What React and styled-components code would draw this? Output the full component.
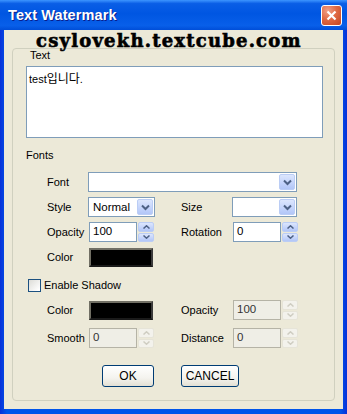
import React from "react";
import styled, { createGlobalStyle } from "styled-components";

const GlobalStyle = createGlobalStyle`
  html, body {
    margin: 0;
    padding: 0;
    background: #ffffff;
  }
  * {
    box-sizing: border-box;
  }
`;

const Window = styled.div`
  position: relative;
  width: 347px;
  height: 414px;
  display: flex;
  flex-direction: column;
  background: linear-gradient(90deg, #0831d9 0%, #0055ea 2%, #0055ea 98%, #0831d9 100%);
  font-family: "Liberation Sans", Tahoma, sans-serif;
  font-size: 11px;
  color: #000;
  overflow: hidden;
`;

const TitleBar = styled.div`
  height: 30px;
  flex: none;
  display: flex;
  align-items: center;
  justify-content: space-between;
  padding: 0 5px 0 8px;
  background: linear-gradient(
    180deg,
    #3d95ff 0%,
    #0a5ee6 12%,
    #0056e2 45%,
    #085fe9 85%,
    #004ed8 100%
  );
`;

const Title = styled.span`
  color: #ffffff;
  font-weight: bold;
  font-size: 14.5px;
  letter-spacing: 0.1px;
  text-shadow: 1px 1px 0 #0a1e8c;
`;

const CloseButton = styled.div`
  width: 21px;
  height: 21px;
  border: 1px solid #ffffff;
  border-radius: 3px;
  display: flex;
  align-items: center;
  justify-content: center;
  background: radial-gradient(circle at 30% 25%, #f0a088 0%, #e06a44 45%, #c24420 100%);
`;

const Body = styled.div`
  flex: 1;
  margin: 0 4px 5px 4px;
  background: #ece9d8;
  padding: 18px 8px 8px 8px;
  display: flex;
`;

const Group = styled.div`
  flex: 1;
  border: 1px solid #d0d0bf;
  border-radius: 4px;
  padding: 0 11px 13px 13px;
  display: flex;
  flex-direction: column;
`;

const Caption = styled.div`
  line-height: 13px;
  margin-left: ${(p) => p.$indent || 0}px;
  margin-top: ${(p) => p.$top || 0}px;
`;

const TextBox = styled.div`
  margin-top: 4px;
  height: 72px;
  background: #ffffff;
  border: 1px solid #7f9db9;
  padding: 4px 2px;
  font-size: 11px;
  line-height: 14px;
`;

const Hangul = styled.span`
  font-family: "Noto Sans CJK KR", sans-serif;
  font-size: 12px;
`;

const FieldGrid = styled.div`
  margin: ${(p) => p.$top}px 0 0 21px;
  display: grid;
  grid-template-columns: 41px 67px 26px 51px 65px;
  grid-auto-rows: 20px;
  row-gap: ${(p) => p.$gap}px;
  align-items: center;
`;

const Label = styled.span`
  white-space: nowrap;
  grid-column: ${(p) => p.$col};
`;

const Combo = styled.div`
  grid-column: ${(p) => p.$col};
  height: 20px;
  display: flex;
  align-items: stretch;
  justify-content: space-between;
  background: #ffffff;
  border: 1px solid #7f9db9;
  padding: 1px;
`;

const ComboText = styled.span`
  padding-left: 3px;
  line-height: 16px;
  font-size: 11.5px;
`;

const DropButton = styled.div`
  width: 16px;
  border-radius: 2px;
  border: 1px solid #bbcdf5;
  background: linear-gradient(180deg, #dce6fd 0%, #c3d3fb 60%, #b2c6f7 100%);
  display: flex;
  align-items: center;
  justify-content: center;
`;

const Spin = styled.div`
  grid-column: ${(p) => p.$col};
  margin-left: 1px;
  width: 65px;
  height: 20px;
  display: flex;
  gap: 1px;
`;

const Edit = styled.div`
  flex: 1;
  border: 1px solid ${(p) => (p.$disabled ? "#b5b3a6" : "#7f9db9")};
  background: ${(p) => (p.$disabled ? "#efeee6" : "#ffffff")};
  color: ${(p) => (p.$disabled ? "#333" : "#000")};
  padding-left: 3px;
  line-height: 17px;
  font-size: 11.5px;
`;

const SpinButtons = styled.div`
  width: 16px;
  display: flex;
  flex-direction: column;
  gap: 1px;
`;

const SpinHalf = styled.div`
  flex: 1;
  border-radius: 2px;
  border: 1px solid ${(p) => (p.$disabled ? "#e6e4d8" : "#bbcdf5")};
  background: ${(p) =>
    p.$disabled
      ? "#f3f2ec"
      : "linear-gradient(180deg, #dce6fd 0%, #c3d3fb 60%, #b2c6f7 100%)"};
  display: flex;
  align-items: center;
  justify-content: center;
`;

const Swatch = styled.div`
  grid-column: 2;
  margin-left: 1px;
  width: 64px;
  height: 19px;
  background: #000000;
  border: 2px solid;
  border-color: #716f64 #3a3a3a #1a1a1a #716f64;
`;

const CheckRow = styled.label`
  margin: 11px 0 0 2px;
  height: 14px;
  display: flex;
  align-items: center;
  gap: 3px;
`;

const CheckBox = styled.span`
  width: 13px;
  height: 13px;
  border: 1px solid #1c5180;
  background: linear-gradient(135deg, #dcdcd7 0%, #ffffff 90%);
`;

const ButtonRow = styled.div`
  margin: 17px 0 0 76px;
  display: flex;
  gap: 27px;
`;

const Button = styled.div`
  width: ${(p) => p.$w}px;
  height: 22px;
  border: 1px solid #003c74;
  border-radius: 3px;
  background: linear-gradient(180deg, #ffffff 0%, #f4f3ee 60%, #e3e0d4 100%);
  display: flex;
  align-items: center;
  justify-content: center;
  font-size: 12px;
`;

const Watermark = styled.div`
  position: absolute;
  left: 36px;
  top: 30px;
  font-family: "DejaVu Serif", "Liberation Serif", serif;
  font-weight: 900;
  font-size: 18px;
  letter-spacing: 1.2px;
  color: #000000;
  -webkit-text-stroke: 0.6px #000000;
  pointer-events: none;
`;

const Chevron = ({ color = "#4d6185" }) => (
  <svg width="9" height="7" viewBox="0 0 9 7">
    <polyline points="1,1.5 4.5,5 8,1.5" fill="none" stroke={color} strokeWidth="2" />
  </svg>
);

const Arrow = ({ up, color }) => (
  <svg width="7" height="4" viewBox="0 0 7 4">
    <polyline
      points={up ? "0.5,3.5 3.5,0.8 6.5,3.5" : "0.5,0.5 3.5,3.2 6.5,0.5"}
      fill="none"
      stroke={color}
      strokeWidth="1.5"
    />
  </svg>
);

const SpinBox = ({ col, value, disabled }) => {
  const arrow = disabled ? "#cfcdc2" : "#4d6185";
  return (
    <Spin $col={col}>
      <Edit $disabled={disabled}>{value}</Edit>
      <SpinButtons>
        <SpinHalf $disabled={disabled}>
          <Arrow up color={arrow} />
        </SpinHalf>
        <SpinHalf $disabled={disabled}>
          <Arrow color={arrow} />
        </SpinHalf>
      </SpinButtons>
    </Spin>
  );
};

const ComboBox = ({ col, value }) => (
  <Combo $col={col}>
    <ComboText>{value}</ComboText>
    <DropButton>
      <Chevron />
    </DropButton>
  </Combo>
);

export default function App() {
  return (
    <>
      <GlobalStyle />
      <Window>
        <TitleBar>
          <Title>Text Watermark</Title>
          <CloseButton>
            <svg width="11" height="11" viewBox="0 0 11 11">
              <path d="M1.5 1.5 L9.5 9.5 M9.5 1.5 L1.5 9.5" stroke="#fff" strokeWidth="2.2" />
            </svg>
          </CloseButton>
        </TitleBar>
        <Body>
          <Group>
            <Caption $indent={4}>Text</Caption>
            <TextBox>
              test<Hangul>입니다</Hangul>.
            </TextBox>
            <Caption $top={11}>Fonts</Caption>
            <FieldGrid $top={10} $gap={5}>
              <Label $col={1}>Font</Label>
              <ComboBox col="2 / 6" value="" />
              <Label $col={1}>Style</Label>
              <ComboBox col={2} value="Normal" />
              <Label $col={4}>Size</Label>
              <ComboBox col={5} value="" />
              <Label $col={1}>Opacity</Label>
              <SpinBox col={2} value="100" />
              <Label $col={4}>Rotation</Label>
              <SpinBox col={5} value="0" />
              <Label $col={1}>Color</Label>
              <Swatch />
            </FieldGrid>
            <CheckRow>
              <CheckBox />
              Enable Shadow
            </CheckRow>
            <FieldGrid $top={8} $gap={8}>
              <Label $col={1}>Color</Label>
              <Swatch />
              <Label $col={4}>Opacity</Label>
              <SpinBox col={5} value="100" disabled />
              <Label $col={1}>Smooth</Label>
              <SpinBox col={2} value="0" disabled />
              <Label $col={4}>Distance</Label>
              <SpinBox col={5} value="0" disabled />
            </FieldGrid>
            <ButtonRow>
              <Button $w={52}>OK</Button>
              <Button $w={58}>CANCEL</Button>
            </ButtonRow>
          </Group>
        </Body>
        <Watermark>csylovekh.textcube.com</Watermark>
      </Window>
    </>
  );
}
